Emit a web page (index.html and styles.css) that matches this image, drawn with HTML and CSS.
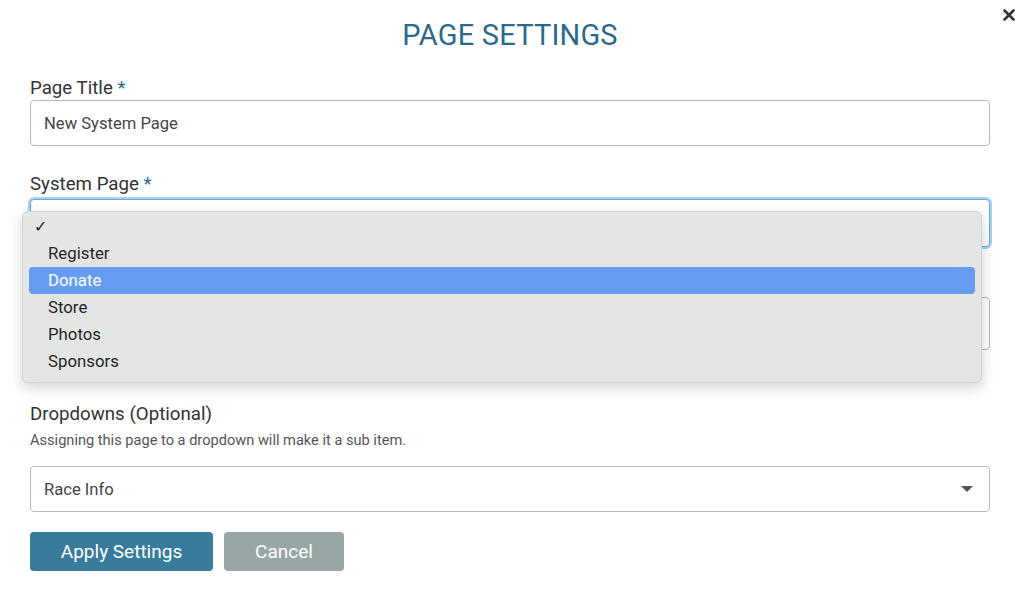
FILE: index.html
```html
<!DOCTYPE html>
<html lang="en">
<head>
<meta charset="utf-8">
<title>Page Settings</title>
<link rel="stylesheet" href="styles.css">
</head>
<body>
<div class="modal">
  <button class="close" aria-label="Close">
    <svg width="12" height="12" viewBox="0 0 12 12"><path d="M1.5 1.5L10.5 10.5M10.5 1.5L1.5 10.5" stroke="#333" stroke-width="2.6" stroke-linecap="round"/></svg>
  </button>
  <h1 class="title">PAGE SETTINGS</h1>

  <div class="field field-first">
    <label class="label">Page Title <span class="req">*</span></label>
    <div class="input">New System Page</div>
  </div>

  <div class="field field-system">
    <label class="label">System Page <span class="req">*</span></label>
    <div class="select-wrap">
      <div class="input focused"></div>
      <ul class="menu">
        <li class="item check">✓</li>
        <li class="item">Register</li>
        <li class="item active">Donate</li>
        <li class="item">Store</li>
        <li class="item">Photos</li>
        <li class="item">Sponsors</li>
      </ul>
    </div>
  </div>

  <div class="field field-hidden">
    <div class="input tall"></div>
  </div>

  <div class="field field-dropdowns">
    <label class="label">Dropdowns (Optional)</label>
    <p class="help">Assigning this page to a dropdown will make it a sub item.</p>
    <div class="input select">
      <span>Race Info</span>
      <span class="caret"></span>
    </div>
  </div>

  <div class="actions">
    <button class="btn btn-primary">Apply Settings</button>
    <button class="btn btn-muted">Cancel</button>
  </div>
</div>
</body>
</html>
```

FILE: styles.css
```css
* { box-sizing: border-box; }
html, body {
  margin: 0;
  padding: 0;
  background: #fff;
  font-family: Roboto, "Liberation Sans", Arial, sans-serif;
  color: #333;
}
.modal {
  position: relative;
  padding: 19px 34px 0 30px;
}
.close {
  position: absolute;
  top: 9px;
  right: 9px;
  width: 12px;
  height: 12px;
  padding: 0;
  border: 0;
  background: none;
  display: flex;
}
.title {
  margin: 0;
  font-size: 29px;
  line-height: 32px;
  font-weight: 400;
  text-align: center;
  color: #2c6a8c;
  letter-spacing: 0.2px;
}
.field { margin-top: 28px; display: flex; flex-direction: column; }
.field-first { margin-top: 26px; }
.field-system { margin-top: 27px; }
.field-system .label { margin-bottom: 4px; }
.field-hidden { margin-top: 50px; }
.label {
  font-size: 18.7px;
  line-height: 22px;
  color: #333;
  margin-bottom: 1px;
}
.req { color: #2c6a8c; }
.input {
  height: 46px;
  border: 1px solid #b9b9b9;
  border-radius: 4px;
  background: #fff;
  font-size: 16.6px;
  color: #444;
  padding: 0 13px;
  display: flex;
  align-items: center;
}
.input.tall { height: 53px; }
.input.focused {
  height: 48px;
  border-color: #6fa8cf;
  box-shadow: 0 0 0 2px #a6d3f1;
}
.select-wrap { position: relative; }
.menu {
  position: absolute;
  top: 12px;
  left: -8px;
  width: 960px;
  margin: 0;
  padding: 1px 6px 7px;
  list-style: none;
  background: #e4e5e5;
  border: 1px solid #d3d3d3;
  border-radius: 6px;
  box-shadow: 0 5px 14px rgba(0, 0, 0, 0.18);
  z-index: 2;
}
.item {
  height: 27px;
  line-height: 26px;
  padding-left: 19px;
  font-size: 16.8px;
  color: #262626;
  border-radius: 4px;
}
.item.check { padding-left: 5px; font-size: 16px; color: #222; line-height: 28px; }
.item.active { background: #679cf3; color: #fff; }
.field-dropdowns { margin-top: 53px; }
.help {
  margin: 5px 0 17px;
  font-size: 14.6px;
  line-height: 18px;
  color: #555;
}
.select { justify-content: space-between; padding-right: 16px; }
.caret {
  width: 0;
  height: 0;
  border-left: 6px solid transparent;
  border-right: 6px solid transparent;
  border-top: 6px solid #555;
}
.actions {
  margin-top: 20px;
  display: flex;
  gap: 11px;
}
.btn {
  height: 39px;
  border: 0;
  border-radius: 4px;
  font-family: Roboto, "Liberation Sans", Arial, sans-serif;
  font-size: 19px;
  color: #fff;
  padding: 0;
}
.btn-primary { width: 183px; background: #387b9a; }
.btn-muted { width: 120px; background: #99a6a6; }
```
